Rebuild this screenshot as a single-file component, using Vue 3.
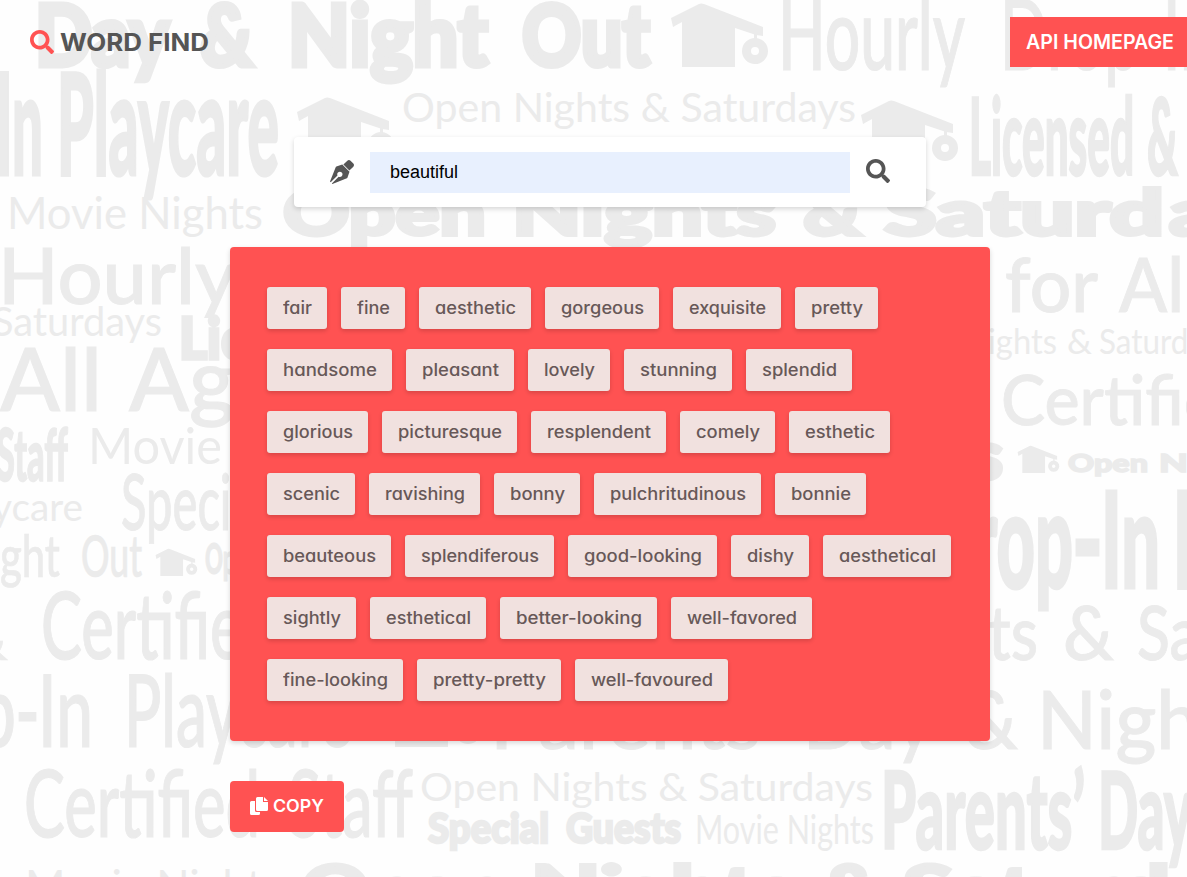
<script setup>
const F = 'fat', B = 'bold', M = 'mid', R = 'light'

// [text, x, baseline, width, size, weight]
const scatter = [
  ['Day', 35, 66, 134, 86, F], ['&', 200, 66, 53, 86, F], ['Night', 288, 66, 200, 86, F], ['Out', 522, 66, 128, 86, F],
  ['Hourly', 778, 70, 187, 100, M], ['Drop-In', 1000, 70, 215, 98, M],
  ['In', -4, 175, 47, 141, B], ['Playcare', 57, 175, 222, 141, B],
  ['Open Nights & Saturdays', 402, 122, 454, 41, R], ['Licensed', 969, 175, 165, 106, B], ['&', 1147, 175, 31, 106, B],
  ['Movie Nights', 7, 229, 256, 44, R], ['Open', 283, 235, 203, 63, F], ['Nights', 512, 235, 264, 63, F],
  ['&', 803, 235, 58, 63, F], ['Saturd', 884, 235, 280, 63, F], ['ays', 1169, 235, 120, 63, F],
  ['Hourly', -2, 304, 238, 78, M], ['for', 1005, 312, 93, 76, M], ['All', 1119, 312, 82, 76, M],
  ['Saturdays', -8, 336, 170, 40, R], ['Licensed', 179, 359, 210, 58, F],
  ['ights', 988, 354, 69, 34, R], ['&', 1067, 354, 25, 34, R], ['Saturdays', 1099, 354, 134, 34, R],
  ['All', 0, 411, 102, 87, M], ['Ages', 129, 411, 190, 87, M], ['Certified', 1001, 425, 255, 70, M],
  ['Staff', -4, 481, 72, 72, B], ['Movie', 88, 464, 134, 50, R],
  ['s', 972, 479, 31, 66, F], ['Open', 1068, 472, 80, 25, F], ['Nights', 1159, 472, 110, 25, F],
  ['Playcare', -59, 521, 142, 38, R], ['Special', 121, 530, 145, 77, M],
  ['Drop', 922, 588, 151, 134, B], ['-', 1072, 588, 31, 134, B], ['In', 1101, 588, 59, 134, B], ['P', 1172, 588, 50, 134, B],
  ['Night', -42, 577, 102, 58, M], ['Out', 81, 577, 61, 58, M], ['Open', 205, 574, 55, 42, B],
  ['&', -36, 660, 44, 50, M], ['Certified', 41, 659, 236, 93, M],
  ['ts', 988, 660, 50, 76, M], ['&', 1063, 660, 51, 76, M], ['Saturdays', 1137, 660, 260, 76, M],
  ['p', -22, 747, 38, 101, M], ['-', 15, 747, 25, 101, M], ['In', 38, 747, 55, 101, M], ['Playcare', 124, 747, 228, 101, M],
  ['Parents’', 490, 749, 288, 82, M], ['Day', 803, 749, 130, 82, M], ['&', 964, 749, 54, 82, M], ['Nights', 1037, 749, 225, 82, M],
  ['Certified', 24, 837, 236, 92, M], ['Staff', 288, 837, 125, 92, M],
  ['Open Nights & Saturdays', 420, 801, 453, 39, R], ['Special', 428, 843, 121, 41, F], ['Guests', 566, 843, 115, 41, F],
  ['Movie Nights', 695, 844, 179, 40, R], ['Parents’', 881, 849, 204, 106, B], ['Day', 1098, 849, 94, 106, B],
  ['Movie Nights', 25, 902, 256, 44, R], ['Open', 302, 911, 203, 63, F], ['Nights', 531, 911, 264, 63, F],
  ['&', 822, 911, 58, 63, F], ['Saturdays', 903, 911, 400, 63, F]
]

// [x, y, scale]
const houses = [[672, 4, 1], [298, 98, 1], [862, 101, 1], [1018, 446, 0.43], [156, 549, 0.43], [385, 684, 1]]

const words = [
  ['fair', 60], ['fine', 64], ['aesthetic', 112], ['gorgeous', 114], ['exquisite', 108], ['pretty', 83],
  ['handsome', 125], ['pleasant', 108], ['lovely', 82], ['stunning', 108], ['splendid', 106],
  ['glorious', 101], ['picturesque', 135], ['resplendent', 135], ['comely', 95], ['esthetic', 101],
  ['scenic', 88], ['ravishing', 111], ['bonny', 86], ['pulchritudinous', 167], ['bonnie', 91],
  ['beauteous', 124], ['splendiferous', 149], ['good-looking', 149], ['dishy', 78], ['aesthetical', 128],
  ['sightly', 89], ['esthetical', 116], ['better-looking', 157], ['well-favored', 141],
  ['fine-looking', 136], ['pretty-pretty', 144], ['well-favoured', 153]
]

// Widens or narrows a label so that it fills the given width.
const vFit = {
  mounted(el, { value }) {
    el.style.transform = `scaleX(${value / el.getBoundingClientRect().width})`
  }
}

const glass = 'M505 442.700L405.300 343c-4.500-4.500-10.600-7-17-7H372c27.600-35.300 44-79.700 44-128C416 93.100 322.900 0 208 0S0 93.100 0 208s93.100 208 208 208c48.300 0 92.700-16.400 128-44v16.300c0 6.400 2.500 12.500 7 17l99.700 99.700c9.400 9.400 24.600 9.400 33.900 0l28.300-28.300c9.400-9.400 9.400-24.600.1-34zM208 336c-70.700 0-128-57.200-128-128 0-70.700 57.200-128 128-128 70.700 0 128 57.200 128 128 0 70.700-57.200 128-128 128z'
</script>

<template>
  <div class="page">
    <svg class="backdrop" width="1187" height="877" aria-hidden="true">
      <text v-for="(t, i) in scatter" :key="i" :class="t[5]" :x="t[1]" :y="t[2]" :font-size="t[4]"
        :textLength="t[3]" lengthAdjust="spacingAndGlyphs">{{ t[0] }}</text>
      <g v-for="(h, i) in houses" :key="'h' + i" :transform="`translate(${h[0]} ${h[1]}) scale(${h[2]})`">
        <path d="M-1 14 27 0Q29-1 32 0L91 23V32L84 31 63 24V63H10V18L1 23Z" />
        <path d="M82 30h3v10h-3z" />
        <circle class="tire" cx="83" cy="47" r="8.500" />
      </g>
    </svg>

    <header class="nav">
      <div class="brand">
        <svg class="brand-icon" viewBox="0 0 512 512"><path :d="glass" /></svg>
        <span v-fit="149" class="label">WORD FIND</span>
      </div>
      <a class="api"><span v-fit="148" class="label">API HOMEPAGE</span></a>
    </header>

    <main>
      <form class="search" @submit.prevent>
        <svg class="icon" viewBox="0 0 512 512">
          <path d="M136.600 138.800a20.400 20.400 0 0 0-12.900 13L0 460.200 14.800 475 159.900 329.900c-3.600-7.600-5.900-16-5.900-25 0-31.300 25.300-56.600 56.600-56.600s56.600 25.300 56.600 56.600-25.300 56.600-56.600 56.600c-9.600 0-18-2.300-25.600-5.900L39.900 500.600 51.800 512l308.500-123.700a20.400 20.400 0 0 0 13-12.900L416 250 262 96 136.600 138.800zM497.900 74.200l-60.100-60.100c-18.800-18.800-49.200-18.800-67.900 0l-84.200 84.200 128 128 84.200-84.200c18.800-18.800 18.800-49.200 0-67.900z" />
        </svg>
        <div class="field">beautiful</div>
        <svg class="icon lens" viewBox="0 0 512 512"><path :d="glass" /></svg>
      </form>

      <section class="panel">
        <span v-for="w in words" :key="w[0]" class="tag" :style="{ width: w[1] + 'px' }">
          <span v-fit="w[1] - 31" class="label">{{ w[0] }}</span>
        </span>
      </section>

      <button class="copy" type="button">
        <svg viewBox="0 0 18 18">
          <path d="M1.500 4H5v9.500Q5 15 6.500 15H10v1.500Q10 18 8.500 18h-7Q0 18 0 16.500v-11Q0 4 1.500 4Z" />
          <path d="M7.500 0H13v5h5v7.500Q18 14 16.500 14h-9Q6 14 6 12.500v-11Q6 0 7.500 0Z" />
          <path d="M14 0 18 4H14Z" />
        </svg>
        <span v-fit="51" class="label">COPY</span>
      </button>
    </main>
  </div>
</template>

<style>
body {
  background: #fefefe;
}
</style>

<style scoped>
.page {
  position: relative;
  width: 1187px;
  height: 877px;
  overflow: hidden;
  box-sizing: border-box;
  padding-top: 17px;
  background: #fefefe;
  color: #555;
  font-family: Inter, "Liberation Sans", sans-serif;
  font-feature-settings: "cv11";
}
.backdrop {
  position: absolute;
  inset: 0;
  fill: #ebebeb;
  font-family: Lato, "Open Sans", sans-serif;
}
.fat {
  font-weight: 900;
  stroke: #ebebeb;
  stroke-width: 0.06em;
}
.bold {
  font-weight: 900;
  stroke: #ebebeb;
  stroke-width: 0.022em;
}
.mid {
  font-weight: 500;
  stroke: #ebebeb;
  stroke-width: 0.012em;
}
.light { font-weight: 400; }
.tire {
  fill: none;
  stroke: #ebebeb;
  stroke-width: 9px;
}
.label {
  display: inline-block;
  transform-origin: left center;
}
.nav {
  position: relative;
  display: flex;
  justify-content: space-between;
  align-items: center;
  height: 50px;
  padding-left: 30px;
  white-space: nowrap;
}
.brand {
  display: flex;
  align-items: center;
  gap: 6px;
  font-size: 24px;
  font-weight: 700;
}
.brand-icon {
  width: 24px;
  height: 24px;
  fill: #ff5252;
}
.api {
  box-sizing: border-box;
  width: 177px;
  height: 50px;
  padding-left: 16px;
  background: #ff5252;
  color: #fff;
  font-size: 19.500px;
  font-weight: 600;
  line-height: 50px;
}
main {
  position: relative;
  width: 760px;
  margin: 70px 0 0 230px;
}
.search {
  box-sizing: border-box;
  display: flex;
  align-items: center;
  gap: 16px;
  width: 632px;
  height: 70px;
  margin: 0 auto;
  padding: 0 36px;
  border-radius: 4px;
  background: #fff;
  box-shadow: 0 2px 5px rgba(0, 0, 0, 0.16);
}
.icon {
  width: 24px;
  height: 24px;
  fill: #555;
}
.lens {
  margin-top: -2px;
}
.field {
  flex: 1;
  height: 41px;
  margin-top: 1px;
  padding-left: 20px;
  background: #e8f0fe;
  color: #000;
  font: 18px/40px "Liberation Sans", Arial, sans-serif;
}
.panel {
  box-sizing: border-box;
  display: flex;
  flex-wrap: wrap;
  align-content: flex-start;
  gap: 20px 14px;
  height: 494px;
  margin-top: 40px;
  padding: 40px 37px;
  border-radius: 4px;
  background: #ff5252;
  box-shadow: 0 2px 5px rgba(0, 0, 0, 0.16);
}
.tag {
  box-sizing: border-box;
  height: 42px;
  padding-left: 15.500px;
  border-radius: 3px;
  background: #f1e1df;
  box-shadow: 0 2px 4px rgba(0, 0, 0, 0.16);
  color: #675858;
  font-size: 17px;
  font-weight: 450;
  line-height: 42px;
  white-space: nowrap;
}
.copy {
  display: flex;
  align-items: center;
  gap: 5px;
  width: 114px;
  height: 51px;
  margin-top: 40px;
  padding: 0 0 2px 20px;
  border: 0;
  border-radius: 4px;
  background: #ff5252;
  color: #fff;
  font: 600 17.500px Inter, "Liberation Sans", sans-serif;
}
.copy svg {
  width: 18px;
  height: 18px;
  fill: #fff;
}
</style>
